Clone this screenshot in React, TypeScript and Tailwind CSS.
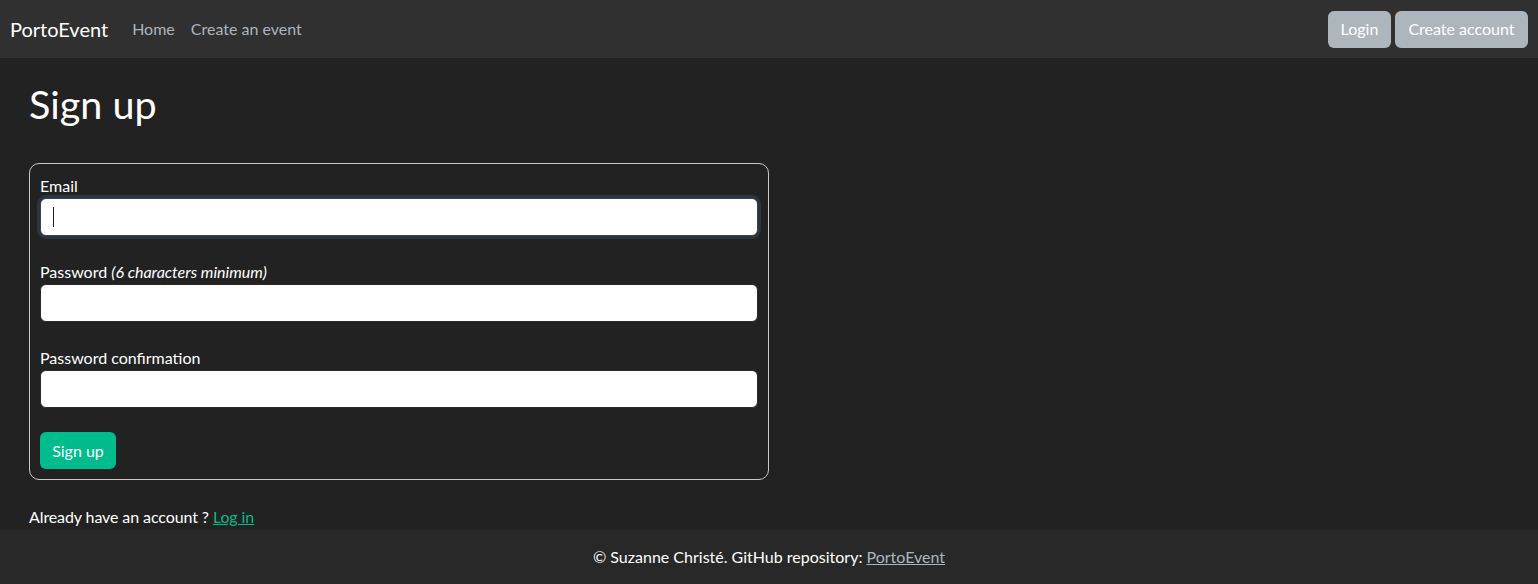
import React from 'react';

const fields = [
  { id: 'email', label: 'Email', focused: true },
  { id: 'password', label: 'Password', hint: '(6 characters minimum)' },
  { id: 'password_confirmation', label: 'Password confirmation' },
];

export default function App() {
  return (
    <div className="min-h-screen bg-[#222222] text-white font-['Lato',sans-serif] text-[16px] flex flex-col">
      {/* navbar */}
      <nav className="h-[58px] bg-[#303030] flex items-center justify-between px-[10px]">
        <div className="flex items-center">
          <a className="text-[20px] text-white mr-6">PortoEvent</a>
          <div className="flex items-center gap-4 text-[#adb5bd]">
            <a>Home</a>
            <a>Create an event</a>
          </div>
        </div>
        <div className="flex items-center gap-1">
          <button className="h-[37px] w-[63px] rounded-md bg-[#adb5bd] text-white">Login</button>
          <button className="h-[37px] w-[133px] rounded-md bg-[#adb5bd] text-white">Create account</button>
        </div>
      </nav>

      {/* main */}
      <main className="flex-1 px-[29px] pt-[22px]">
        <h1 className="text-[39.5px] leading-[48px] mb-[35px]">Sign up</h1>

        <form className="w-[740px] border border-[#c9c9c9] rounded-[10px] p-[10px]">
          {fields.map((f) => (
            <div key={f.id} className="mb-6">
              <label className="block leading-6">
                {f.label} {f.hint && <em>{f.hint}</em>}
              </label>
              <div
                className={
                  f.focused
                    ? 'h-[38px] rounded-md bg-white border border-[#3a4654] flex items-center pl-3 outline-[3px] outline-solid outline-[#2b3540]'
                    : 'h-[38px] rounded-md bg-white border border-[#2a2a2a]'
                }
              >
                {f.focused && <span className="w-px h-[20px] bg-[#222]" />}
              </div>
            </div>
          ))}
          <button type="button" className="h-[37px] w-[76px] rounded-md bg-[#00bc8c] text-white">
            Sign up
          </button>
        </form>

        <p className="mt-[25px] leading-6 tracking-[-0.1px]">
          Already have an account ? <a className="text-[#00bc8c] underline">Log in</a>
        </p>
      </main>

      {/* footer */}
      <footer className="h-[54px] bg-[#282828] flex items-center justify-center">
        <p>
          © Suzanne Christé. GitHub repository: <a className="text-[#adb5bd] underline">PortoEvent</a>
        </p>
      </footer>
    </div>
  );
}
